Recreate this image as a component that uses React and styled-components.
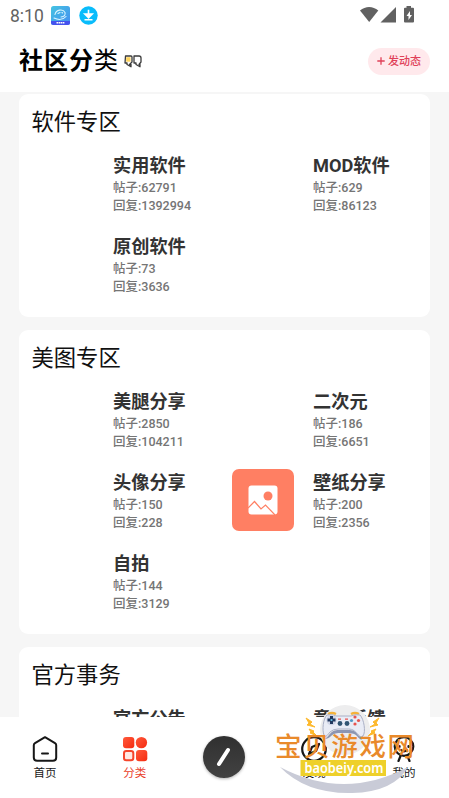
import styled, { createGlobalStyle, css } from "styled-components";

const sections = [
  {
    title: "软件专区",
    items: [
      { name: "实用软件", posts: 62791, replies: 1392994 },
      { name: "MOD软件", posts: 629, replies: 86123 },
      { name: "原创软件", posts: 73, replies: 3636 },
    ],
  },
  {
    title: "美图专区",
    items: [
      { name: "美腿分享", posts: 2850, replies: 104211 },
      { name: "二次元", posts: 186, replies: 6651 },
      { name: "头像分享", posts: 150, replies: 228 },
      { name: "壁纸分享", posts: 200, replies: 2356, picture: true },
      { name: "自拍", posts: 144, replies: 3129 },
    ],
  },
  {
    title: "官方事务",
    items: [{ name: "官方公告" }, { name: "意见反馈" }],
  },
];

export default function App() {
  return (
    <Screen>
      <GlobalStyle />
      <StatusBar>
        <Clock>8:10</Clock>
        <AppBadge />
        <DownloadBadge />
        <SystemIcons />
      </StatusBar>
      <Header>
        <Title>
          <b>社区分</b>类
        </Title>
        <QuoteMark />
        <PostButton>
          <PlusIcon />
          <span>发动态</span>
        </PostButton>
      </Header>
      <Content>
        {sections.map((section) => (
          <Card key={section.title}>
            <CardTitle>{section.title}</CardTitle>
            <Grid>
              {section.items.map((item) => (
                <Item key={item.name}>
                  <Thumb $filled={item.picture}>
                    {item.picture && <PictureIcon />}
                  </Thumb>
                  <ItemText>
                    <ItemName>{item.name}</ItemName>
                    {item.posts && <Stat>帖子:{item.posts}</Stat>}
                    {item.replies && <Stat>回复:{item.replies}</Stat>}
                  </ItemText>
                </Item>
              ))}
            </Grid>
          </Card>
        ))}
      </Content>
      <NavBar>
        <NavItem>
          <HomeIcon />
          首页
        </NavItem>
        <NavItem $active>
          <CategoryIcon />
          分类
        </NavItem>
        <ComposeSlot>
          <ComposeButton>
            <svg width="42" height="42" viewBox="0 0 42 42">
              <path d="M16 28L25 14" stroke="#fff" strokeWidth="4" strokeLinecap="round" />
            </svg>
          </ComposeButton>
        </ComposeSlot>
        <NavItem>
          <CompassIcon />
          发现
        </NavItem>
        <NavItem>
          <ProfileIcon />
          我的
        </NavItem>
      </NavBar>
      <Watermark />
    </Screen>
  );
}

function AppBadge() {
  return (
    <svg width="19" height="19" viewBox="0 0 19 19">
      <defs>
        <linearGradient id="badge" x1="0" y1="0" x2="1" y2="1">
          <stop offset="0" stopColor="#45c4e2" />
          <stop offset="1" stopColor="#438df0" />
        </linearGradient>
      </defs>
      <rect width="19" height="19" rx="2.5" fill="url(#badge)" />
      <path d="M0 15h19v1.5a2.5 2.5 0 0 1-2.5 2.5h-14A2.5 2.5 0 0 1 0 16.5z" fill="#4552ed" />
      <path d="M4 8.500C5 3.500 12 2.500 14 6.500q1 4-4 4.500M3 12c4 2 9 2 12-1.500M7 7.500l2-1M11 6.500l.5.5" stroke="#d8f4ff" strokeWidth="1.100" fill="none" strokeLinecap="round" />
      <path d="M5.500 16.700h8" stroke="#fff" strokeWidth="1.500" strokeDasharray="1.600 .5" />
    </svg>
  );
}

function DownloadBadge() {
  return (
    <svg width="19" height="19" viewBox="0 0 19 19">
      <circle cx="9.500" cy="9.500" r="9.200" fill="#09bcfb" />
      <path d="M9.500 3.800v6.500M9.500 11.800L5.800 8h7.400z" stroke="#fff" strokeWidth="1.600" fill="none" />
      <path d="M9.500 11.800L5.800 8h7.400zM5.500 13h8v1.500h-8z" fill="#fff" />
    </svg>
  );
}

function SystemIcons() {
  return (
    <SystemSvg width="56" height="18" viewBox="0 0 56 18" fill="#616161">
      <path d="M0 4.500C5.500-.3 12.800-.3 18.300 4.500L9.200 16z" />
      <path d="M36 1v15.500H20.500z" />
      <path d="M46.500 0h4.500v1.700h2a1 1 0 0 1 1 1v12.800a1 1 0 0 1-1 1h-8a1 1 0 0 1-1-1V2.700a1 1 0 0 1 1-1h1.500z" />
      <path d="M50 5l-3.500 5h2v4l3.500-5h-2z" fill="#fff" />
    </SystemSvg>
  );
}

function QuoteMark() {
  return (
    <QuoteSvg width="18" height="13" viewBox="0 0 18 13" fill="none" stroke="#3b3b3b" strokeWidth="1.300" strokeLinejoin="round">
      <path d="M1.500 1h5.500q1 0 1 1v5L5.500 9.500H7v2.300L3 9.500V8H1z" />
      <path d="M2.200 2.200h4.300v4.500H2.200z" fill="#ffd45c" stroke="none" />
      <path d="M10 1h5q2 0 2 2v4l-2 2.500h1v2.300L12 9.500V8h-2z" />
    </QuoteSvg>
  );
}

function PlusIcon() {
  return (
    <svg width="8" height="8" viewBox="0 0 8 8">
      <path d="M4 .3v7.400M.3 4h7.400" stroke="#e04058" strokeWidth="1.300" />
    </svg>
  );
}

function PictureIcon() {
  return (
    <svg width="30" height="30" viewBox="0 0 30 30">
      <rect x=".5" y=".5" width="29" height="29" rx="3" fill="#fff" />
      <circle cx="20" cy="11" r="4.500" fill="#ff7f63" />
      <path d="M0 23l6.500-6.500L13 24l4.500-4L27 30" stroke="#ff7f63" strokeWidth="1.200" fill="none" />
    </svg>
  );
}

function HomeIcon() {
  return (
    <svg width="26" height="26" viewBox="0 0 26 26" fill="none" stroke="#171717" strokeWidth="2" strokeLinejoin="round" strokeLinecap="round">
      <path d="M13 1.200L23 7.200q1.200.7 1.200 2V21.500q0 3.300-3.300 3.300H5.100q-3.300 0-3.300-3.300V9.200q0-1.300 1.200-2z" />
      <path d="M10 17.500h6" />
    </svg>
  );
}

function CategoryIcon() {
  return (
    <svg width="26" height="26" viewBox="0 0 26 26">
      <defs>
        <linearGradient id="hot" x1="0" y1="0" x2="1" y2="1">
          <stop offset="0" stopColor="#ff5a3c" />
          <stop offset="1" stopColor="#f52b10" />
        </linearGradient>
      </defs>
      <rect x="1" y="1" width="11.300" height="11.300" rx="3" fill="url(#hot)" />
      <circle cx="19.400" cy="6.600" r="5.700" fill="url(#hot)" />
      <rect x="2" y="15" width="9.300" height="9.300" rx="2.300" fill="#ffe8e2" stroke="#f5452b" strokeWidth="2" />
      <rect x="14" y="14" width="11.300" height="11.300" rx="3" fill="url(#hot)" />
    </svg>
  );
}

function CompassIcon() {
  return (
    <svg width="26" height="26" viewBox="0 0 26 26" fill="none" stroke="#171717" strokeWidth="2.200">
      <circle cx="13" cy="13" r="11.800" />
      <path d="M18 8l-3 7-7 3 3-7z" strokeLinejoin="round" />
    </svg>
  );
}

function ProfileIcon() {
  return (
    <svg width="26" height="26" viewBox="0 0 26 26" fill="none" stroke="#171717" strokeWidth="2.200" strokeLinecap="round">
      <circle cx="13" cy="10.500" r="9.300" />
      <path d="M8.500 10v1M17.500 10v1M10 14q3 2.500 6 0M9.500 20l-2 5M16.500 20l2 5" />
    </svg>
  );
}

function Watermark() {
  return (
    <WatermarkSvg width="150" height="98" viewBox="0 0 150 98">
      <circle cx="75" cy="30" r="25" fill="#ededee" />
      <path d="M10 67Q74 101 138 67Q124 92 82 93Q36 94 10 67z" fill="#c9cbd7" />
      <path d="M36 18l6 4-2 2 5 3-8-2 2-2zM39 29l5 2-1 1 4 4-7-3 1-1zM109 18l-6 4 2 2-5 3 8-2-2-2zM106 29l-5 2 1 1-4 4 7-3-1-1z" fill="#fdb92d" stroke="#fdb92d" />
      <path d="M58 14q4-2 8 0M81 14q4-2 8 0" stroke="#f4b23a" strokeWidth="2.500" fill="none" />
      <path d="M57 15q6-1 9 1h15q4-2 9-1c4 4 6 17 3 21-3 3-6-4-10-6-2-1-4-1-6-1h-9q-5 0-8 3c-3 4-5 6-6 3-2-5-1-16 3-20z" fill="#e9ecf6" stroke="#aab0c6" />
      <path d="M54 34c0 6 3 4 5 1 5-6 7-5 14-5 8 0 11-1 15 5 3 3 5 4 5-1v3c-1 4-3 3-6-1-3-3-6-3-14-3-7 0-9 0-13 4-4 3-6 2-6-3z" fill="#8c95b2" />
      <circle cx="61.500" cy="20" r="5.200" fill="#d0d5e6" />
      <path d="M61.500 16v8M57.500 20h8" stroke="#20385e" strokeWidth="3" />
      <circle cx="61.500" cy="20" r="1.100" fill="#6cc5e8" />
      <g fill="#e7534f">
        <circle cx="85" cy="17" r="1.600" />
        <circle cx="85" cy="24" r="1.600" />
        <circle cx="88.500" cy="20.500" r="1.600" />
        <circle cx="81.500" cy="20.500" r="1.600" fill="#5399c7" />
        <path d="M68 18.500h3v1.200h-3zM75 18.500h3v1.200h-3z" />
      </g>
      <circle cx="70" cy="23.500" r="2.400" fill="#315573" />
      <circle cx="77" cy="23.500" r="2.400" fill="#315573" />
      <BrandText x="5" y="56" textLength="139">宝贝游戏网</BrandText>
      <path d="M30.500 60H116v16H30.500z" fill="#eed02a" />
      <UrlText x="34.500" y="72.500" textLength="79" lengthAdjust="spacingAndGlyphs">baobeiy.com</UrlText>
    </WatermarkSvg>
  );
}

const GlobalStyle = createGlobalStyle`
  * {
    box-sizing: border-box;
  }
  body {
    margin: 0;
    font-family: Roboto, "Noto Sans CJK SC", sans-serif;
    background: #ffffff;
  }
  svg {
    display: block;
    flex-shrink: 0;
  }
`;

const Screen = styled.div`
  width: 449px;
  height: 798px;
  display: flex;
  flex-direction: column;
  position: relative;
  overflow: hidden;
  background: #f6f6f6;
`;

const StatusBar = styled.div`
  height: 30px;
  padding: 0 33px 0 10px;
  display: flex;
  align-items: center;
  gap: 9px;
  background: #ffffff;
  flex-shrink: 0;
`;

const Clock = styled.span`
  width: 32px;
  padding-top: 1px;
  white-space: nowrap;
  font-size: 17.5px;
  color: #626262;
`;

const SystemSvg = styled.svg`
  margin-left: auto;
`;

const Header = styled.header`
  height: 62px;
  padding: 0 19px;
  display: flex;
  align-items: center;
  background: #ffffff;
  flex-shrink: 0;
`;

const Title = styled.h1`
  margin: 0;
  font-size: 24px;
  line-height: 30px;
  font-weight: 400;
  color: #000000;
  b {
    font-weight: 700;
    letter-spacing: 1px;
  }
`;

const QuoteSvg = styled.svg`
  margin-left: 6px;
`;

const PostButton = styled.button`
  margin-left: auto;
  width: 62px;
  height: 27px;
  padding: 0;
  border: 0;
  border-radius: 14px;
  background: #ffe9ec;
  color: #e04058;
  font: 500 11px/16px Roboto, "Noto Sans CJK SC", sans-serif;
  display: flex;
  align-items: center;
  justify-content: center;
  gap: 3px;
  span {
    padding-top: 1px;
  }
`;

const Content = styled.main`
  flex: 1;
  min-height: 0;
  overflow: hidden;
  padding: 2px 19px 0;
`;

const Card = styled.section`
  margin-bottom: 13px;
  padding: 12px 0 22px 12.500px;
  border-radius: 9px;
  background: #ffffff;
`;

const CardTitle = styled.h2`
  margin: 0 0 14px;
  font-size: 22.3px;
  line-height: 32px;
  font-weight: 400;
  color: #111111;
`;

const Grid = styled.div`
  display: grid;
  grid-template-columns: 200px 199px;
  row-gap: 19px;
`;

const Item = styled.div`
  height: 62px;
  display: flex;
  gap: 19.500px;
  white-space: nowrap;
`;

const ItemText = styled.div`
  padding-top: 1px;
`;

const Thumb = styled.div`
  width: 62px;
  height: 62px;
  border-radius: 7px;
  display: flex;
  align-items: center;
  justify-content: center;
  background: ${({ $filled }) => ($filled ? "#ff7f63" : "transparent")};
`;

const ItemName = styled.div`
  font-size: 18.2px;
  line-height: 26px;
  font-weight: 700;
  color: #333333;
`;

const Stat = styled.div`
  font-size: 12.5px;
  line-height: 18px;
  font-weight: 500;
  color: #757575;
`;

const NavBar = styled.nav`
  height: 81px;
  display: grid;
  grid-template-columns: repeat(5, 1fr);
  background: #ffffff;
  flex-shrink: 0;
`;

const NavItem = styled.div`
  padding-top: 19px;
  display: flex;
  flex-direction: column;
  align-items: center;
  gap: 2px;
  font-size: 11.5px;
  line-height: 18px;
  color: #171717;
  ${({ $active }) =>
    $active &&
    css`
      color: #e9402a;
    `}
`;

const ComposeSlot = styled.div`
  padding-top: 19px;
  display: flex;
  justify-content: center;
`;

const ComposeButton = styled.div`
  width: 42px;
  height: 42px;
  border-radius: 50%;
  background: linear-gradient(#303030, #424242);
  box-shadow: 0 1px 3px rgba(0, 0, 0, 0.3);
`;

const WatermarkSvg = styled.svg`
  position: absolute;
  left: 270px;
  top: 700px;
`;

const BrandText = styled.text`
  font: 500 26.5px "Noto Sans CJK SC", sans-serif;
  fill: #e98a2b;
`;

const UrlText = styled.text`
  font: 600 14.5px "Noto Sans", sans-serif;
  fill: #ffffff;
`;
